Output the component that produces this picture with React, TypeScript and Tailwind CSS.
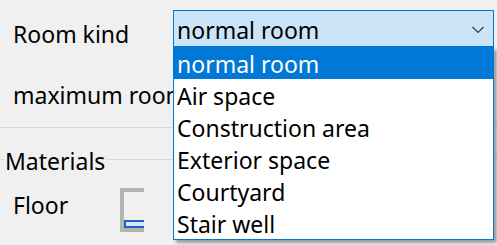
import React from "react";

const kinds = [
  "normal room",
  "Air space",
  "Construction area",
  "Exterior space",
  "Courtyard",
  "Stair well",
];

function Chevron() {
  return (
    <svg width="12" height="8" viewBox="0 0 12 8" className="text-[#3c3c3c]">
      <path d="M0.5 1 L6 6.5 L11.5 1" fill="none" stroke="currentColor" strokeWidth="1.2" />
    </svg>
  );
}

export default function App() {
  return (
    <div
      className="relative flex h-[245px] w-[497px] flex-col overflow-hidden bg-[#f0f0f0] text-[23px] text-black"
      style={{ fontFamily: '"Noto Sans", "Open Sans", sans-serif' }}
    >
      {/* Room kind row */}
      <div className="mt-[10px] flex h-[37px]">
        <div className="w-[173px] shrink-0 pl-[13px] pt-[8px] leading-[32px]">Room kind</div>
        <div className="flex h-[37px] w-[321px] items-start border border-[#0078d7] bg-[#cce4f7]">
          <span className="flex-1 pl-[3px] pt-[4px] leading-[31px]">normal room</span>
          <span className="mr-[9px] mt-[15px]">
            <Chevron />
          </span>
        </div>
      </div>

      <div className="mt-[32px] w-[173px] overflow-hidden whitespace-nowrap pl-[13px] leading-[32px]">
        maximum room height
      </div>

      <div className="mt-[16px] h-px bg-[#d9d9d9]" />

      {/* Materials group */}
      <div className="mt-[14px] flex items-center">
        <div className="h-px w-[4px] bg-[#d9d9d9]" />
        <span className="px-[1px] pt-[3px] leading-[32px]">Materials</span>
        <div className="h-px flex-1 bg-[#d9d9d9]" />
      </div>

      <div className="mt-[9px] flex">
        <div className="w-[120px] shrink-0 pl-[13px] pt-[3px] leading-[32px]">Floor</div>
        <div className="mt-[2px] flex h-[44px] w-[24px] flex-col justify-end border-y-4 border-l-4 border-[#b4b4b4]">
          <div className="h-[8px] border-2 border-r-0 border-[#1f5fc6] bg-[#d8e6f7]" />
        </div>
      </div>

      {/* open dropdown list */}
      <div className="absolute left-[173px] top-[47px] w-[321px] border border-t-0 border-[#0078d7] bg-white shadow-[3px_3px_3px_rgba(0,0,0,0.35)]">
        {kinds.map((k, i) => (
          <div
            key={k}
            className={
              i === 0
                ? "h-[32px] bg-[#0078d7] pl-[3px] pt-[3px] leading-[29px] text-white"
                : "h-[32px] pl-[3px] pt-[3px] leading-[29px]"
            }
          >
            {k}
          </div>
        ))}
      </div>
    </div>
  );
}
